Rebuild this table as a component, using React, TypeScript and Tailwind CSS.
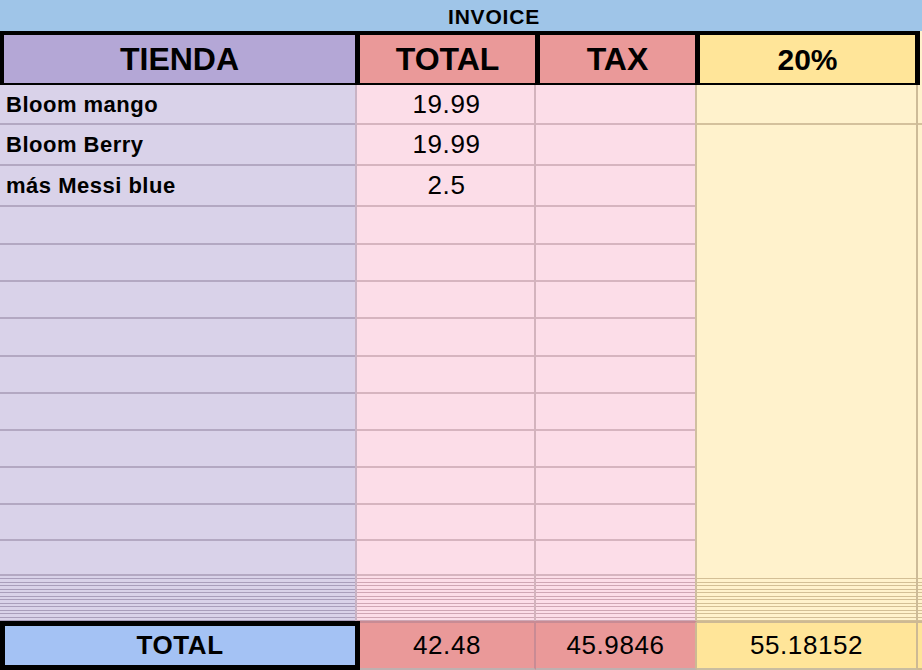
const rows = [
    { name: 'Bloom mango', total: '19.99', h: 'h-[40px]' },
    { name: 'Bloom Berry', total: '19.99', h: 'h-[41px]' },
    { name: 'más Messi blue', total: '2.5', h: 'h-[41px]' },
    { name: '', total: '', h: 'h-[38px]' },
    { name: '', total: '', h: 'h-[37px]' },
    { name: '', total: '', h: 'h-[37px]' },
    { name: '', total: '', h: 'h-[38px]' },
    { name: '', total: '', h: 'h-[37px]' },
    { name: '', total: '', h: 'h-[37px]' },
    { name: '', total: '', h: 'h-[37px]' },
    { name: '', total: '', h: 'h-[37px]' },
    { name: '', total: '', h: 'h-[36px]' },
    { name: '', total: '', h: 'h-[35px]' },
];

const Stripes = ({ line }: { line: string }) => (
    <div className="h-[45px] flex flex-col">
        {Array.from({ length: 13 }).map((_, i) => (
            <div key={i} className={'flex-1 border-b ' + line}></div>
        ))}
    </div>
);

const App = () => {
    return (
        <div className="w-[922px] h-[670px] overflow-hidden bg-white font-['Liberation_Sans',Arial,sans-serif] text-black">
            {/* banner */}
            <div className="h-[31px] bg-[#9fc5e8] flex items-center">
                <span className="ml-[448px] text-[21px] font-bold tracking-[0.8px] leading-none pt-[1px]">INVOICE</span>
            </div>

            {/* header */}
            <div className="flex h-[54px]">
                <div className="w-[920px] bg-black grid grid-cols-[351px_175px_155px_215px] gap-[5px] pl-[4px] pr-[5px] py-[4px]">
                    <div className="bg-[#b4a7d6] flex items-center justify-center text-[32px] font-bold">TIENDA</div>
                    <div className="bg-[#ea9999] flex items-center justify-center text-[32px] font-bold">TOTAL</div>
                    <div className="bg-[#ea9999] flex items-center justify-center text-[32px] font-bold">TAX</div>
                    <div className="bg-[#ffe599] flex items-center justify-center text-[30px] font-bold">20%</div>
                </div>
                <div className="flex-1 bg-[#fff2cc]"></div>
            </div>

            {/* body */}
            <div className="grid grid-cols-[357px_179px_161px_221px_4px]">
                <div className="flex flex-col bg-[#d9d2e9] border-r-2 border-[#c9b3c4]">
                    {rows.map((r, i) => (
                        <div key={i} className={r.h + ' border-b-2 border-[#b3a8c2] flex items-center pl-[6px] text-[22px] font-bold tracking-[0.5px]'}>
                            {r.name}
                        </div>
                    ))}
                    <Stripes line="border-[#a99ebb]" />
                </div>
                <div className="flex flex-col bg-[#fcdde8] border-r-2 border-[#d3b3bd]">
                    {rows.map((r, i) => (
                        <div key={i} className={r.h + ' border-b-2 border-[#d6b4bf] flex items-center justify-center text-[26px] tracking-[0.6px] pl-[2px]'}>
                            {r.total}
                        </div>
                    ))}
                    <Stripes line="border-[#cfa6b4]" />
                </div>
                <div className="flex flex-col bg-[#fcdde8] border-r-2 border-[#d0bfa0]">
                    {rows.map((r, i) => (
                        <div key={i} className={r.h + ' border-b-2 border-[#d6b4bf]'}></div>
                    ))}
                    <Stripes line="border-[#cfa6b4]" />
                </div>
                <div className="flex flex-col bg-[#fff2cc] border-r-2 border-[#cdbb98]">
                    <div className="h-[40px] border-b-2 border-[#d4c19c]"></div>
                    <div className="h-[451px]"></div>
                    <Stripes line="border-[#d3bf95]" />
                </div>
                <div className="flex flex-col bg-[#fff2cc]">
                    <div className="h-[40px] border-b-2 border-[#d4c19c]"></div>
                    <div className="h-[451px]"></div>
                    <Stripes line="border-[#d3bf95]" />
                </div>
            </div>

            {/* totals */}
            <div className="grid grid-cols-[360px_176px_161px_221px_4px] h-[49px]">
                <div className="bg-[#a4c2f4] border-[5px] border-black flex items-center justify-center text-[26px] font-bold tracking-[0.6px]">
                    TOTAL
                </div>
                <div className="bg-[#ea9999] border-t-2 border-b-2 border-r-2 border-t-[#c98b94] border-b-[#bfb0b0] border-r-[#c98b94] flex items-center justify-center text-[26px] tracking-[0.6px]">
                    42.48
                </div>
                <div className="bg-[#ea9999] border-t-2 border-b-2 border-r-2 border-t-[#c98b94] border-b-[#bfb0b0] border-r-[#cdb994] flex items-center justify-center text-[26px] tracking-[0.6px]">
                    45.9846
                </div>
                <div className="bg-[#ffe599] border-t-2 border-b-2 border-r-2 border-t-[#cdb994] border-b-[#c9bda0] border-r-[#cdb994] flex items-center justify-center text-[26px] tracking-[0.6px]">
                    55.18152
                </div>
                <div className="bg-[#ffe599] border-t-2 border-b-2 border-[#cdb994]"></div>
            </div>
        </div>
    );
};

export default App;
